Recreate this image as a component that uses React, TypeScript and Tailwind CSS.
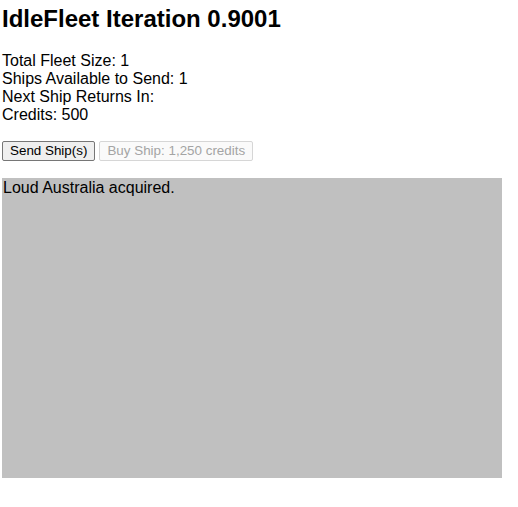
import { FC } from "react";

const Stats: FC = () => (
  <div className="mt-[19px] flex flex-col text-[16px] leading-[18px]">
    <span>Total Fleet Size: 1</span>
    <span>Ships Available to Send: 1</span>
    <span>Next Ship Returns In:</span>
    <span>Credits: 500</span>
  </div>
);

export default function App() {
  return (
    <div className="min-h-screen bg-white pl-[2px] pt-[5px] font-['Liberation_Sans',Arial,sans-serif] text-black">
      <h1 className="text-[24px] font-bold leading-[28px]">IdleFleet Iteration 0.9001</h1>
      <Stats />
      <div className="mt-[17px] flex gap-[4px]">
        <button className="h-[20px] rounded-[2px] border border-[#767676] bg-[#efefef] px-[7px] text-[13.4px] leading-[16px] text-black">
          Send Ship(s)
        </button>
        <button
          disabled
          className="h-[20px] rounded-[2px] border border-[#d6d6d6] bg-[#fafafa] px-[7px] text-[13.4px] leading-[16px] text-[#a4a4a4]"
        >
          Buy Ship: 1,250 credits
        </button>
      </div>
      <div className="mt-[17px] h-[300px] w-[500px] bg-[#c0c0c0] pl-[1px] pt-[1px] text-[16px] leading-[18px]">
        Loud Australia acquired.
      </div>
    </div>
  );
}
